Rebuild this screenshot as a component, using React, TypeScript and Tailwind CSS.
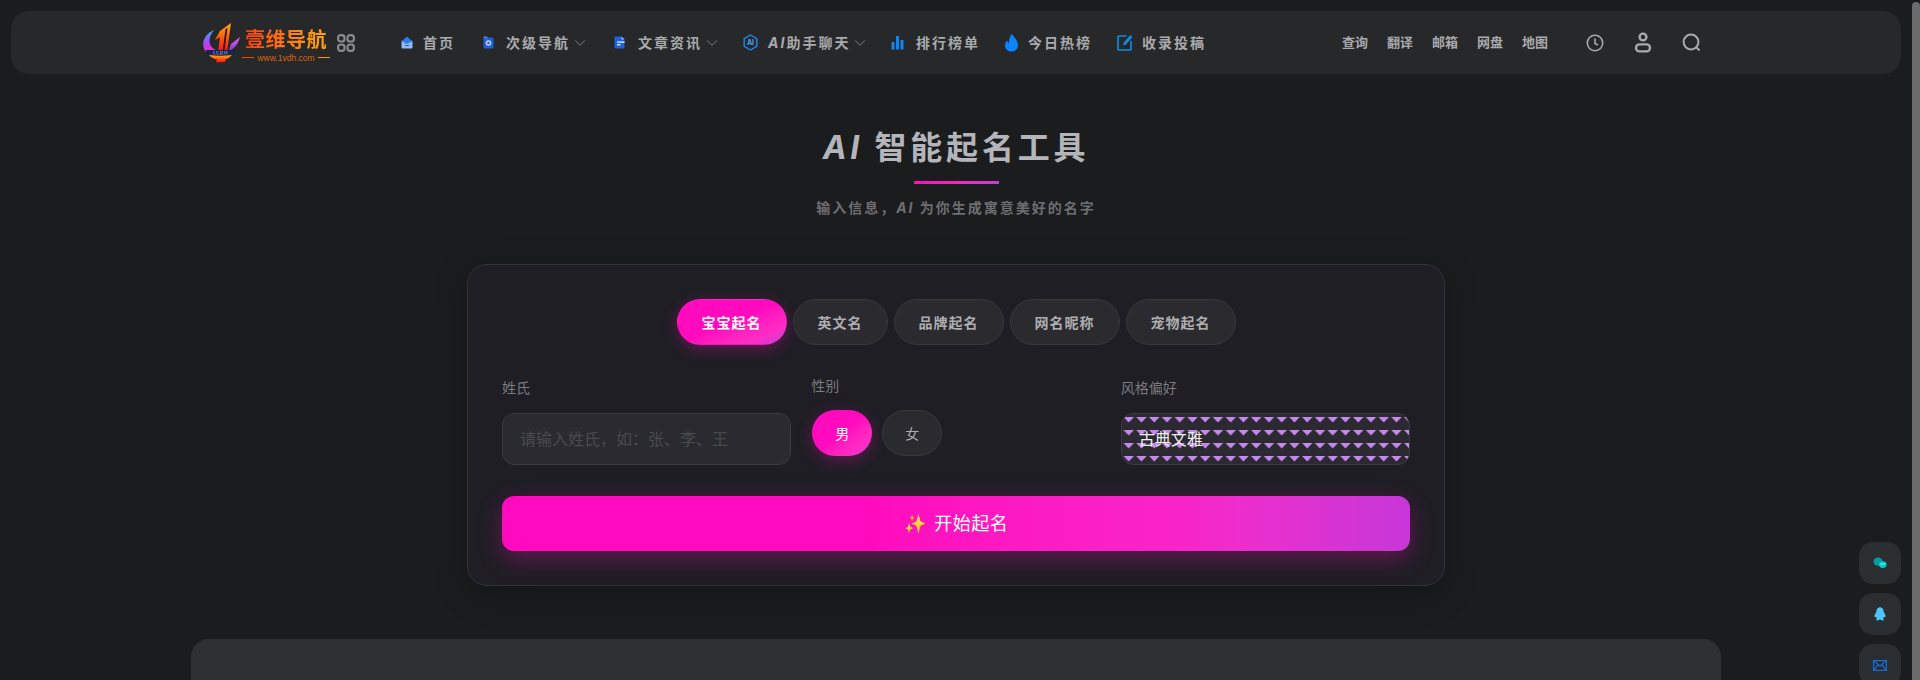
import React from "react";
import { ChevronDown } from "lucide-react";

const sans = "font-['Inter','Noto_Sans_CJK_SC',sans-serif]";

const HomeIcon = () => (
    <svg width="12" height="13" viewBox="0 0 12 13">
        <path d="M6 0.5 L11.5 5.5 H0.5 Z" fill="#2f7be8" />
        <rect x="0.5" y="5" width="11" height="7.5" rx="1" fill="#8dbcf5" />
        <path d="M0.5 5 L6 8 L11.5 5 V4.6 H0.5 Z" fill="#2f7be8" />
        <rect x="4" y="9" width="4" height="1" fill="#2f5fa8" />
    </svg>
);

const CameraIcon = () => (
    <svg width="11" height="13" viewBox="0 0 11 13">
        <rect x="0.5" y="1.5" width="10" height="11" rx="1.5" fill="#1f5fdc" />
        <rect x="0.5" y="0.5" width="4" height="2" rx="0.5" fill="#3f86ee" />
        <circle cx="5.5" cy="7" r="2.8" fill="#bcd8fb" />
        <circle cx="5.5" cy="7" r="1.3" fill="#1f5fdc" />
    </svg>
);

const DocIcon = () => (
    <svg width="11" height="13" viewBox="0 0 11 13">
        <path d="M1.5 0.5 H7.5 L10.5 3.5 V11 a1.5 1.5 0 0 1 -1.5 1.5 H2 a1.5 1.5 0 0 1 -1.5 -1.5 V2 a1.5 1.5 0 0 1 1 -1.5 Z" fill="#1f62e0" />
        <path d="M7.5 0.5 L10.5 3.5 H7.5 Z" fill="#8dbcf5" />
        <rect x="3" y="5.4" width="7.5" height="1.5" fill="#cfe2fb" />
        <rect x="3" y="8" width="3.5" height="1.4" fill="#cfe2fb" />
    </svg>
);

const AiIcon = () => (
    <svg width="15" height="17" viewBox="0 0 15 17">
        <path d="M7.5 1 L13.8 4.7 V12.3 L7.5 16 L1.2 12.3 V4.7 Z" fill="none" stroke="#1e88f0" strokeWidth="1.4" />
        <text x="7.5" y="11.2" textAnchor="middle" fontSize="7" fontWeight="700" fill="#4aa3f5" fontFamily="Inter">AI</text>
    </svg>
);

const BarsIcon = () => (
    <svg width="13" height="15" viewBox="0 0 13 15">
        <rect x="0.5" y="7" width="3" height="7.5" fill="#0f86f0" />
        <rect x="5" y="1" width="3" height="13.5" fill="#0f86f0" />
        <rect x="9.5" y="5" width="3" height="9.5" fill="#0f86f0" />
    </svg>
);

const FireIcon = () => (
    <svg width="15" height="19" viewBox="0 0 15 19">
        <path d="M8 0.5 C8.8 3.5 13.8 6.5 14 12 C14.2 16 11 18.6 7.4 18.6 C3.6 18.6 0.8 16 1 12.2 C1.1 10 2.2 8.3 3.2 7.2 C3.5 8.6 4 9.6 5 10 C4.8 6.5 6 3 8 0.5 Z" fill="#0a84ff" />
    </svg>
);

const EditIcon = () => (
    <svg width="16" height="17" viewBox="0 0 16 17">
        <path d="M9.5 2 H2 a1 1 0 0 0 -1 1 V15 a1 1 0 0 0 1 1 H13 a1 1 0 0 0 1 -1 V7" fill="none" stroke="#0f8ae6" strokeWidth="1.7" />
        <path d="M6 11.5 L6.8 8.5 L13.3 1 L15.5 3 L9 10.4 Z" fill="#0f8ae6" />
    </svg>
);

const GridIcon = () => (
    <svg width="18" height="18" viewBox="0 0 18 18" fill="none" stroke="#8b8c8e" strokeWidth="2.1">
        <rect x="1.1" y="1.1" width="6.4" height="6.4" rx="2.6" />
        <rect x="10.5" y="1.1" width="6.4" height="6.4" rx="2.6" />
        <rect x="1.1" y="10.5" width="6.4" height="6.4" rx="2.6" />
        <rect x="10.5" y="10.5" width="6.4" height="6.4" rx="2.6" />
    </svg>
);

const Logo = () => (
    <svg width="40" height="40" viewBox="0 0 40 40">
        <defs>
            <linearGradient id="wing" x1="0.3" y1="0" x2="0.6" y2="1">
                <stop offset="0" stopColor="#3aa8f0" />
                <stop offset="0.45" stopColor="#b040f0" />
                <stop offset="1" stopColor="#ff2fb0" />
            </linearGradient>
            <linearGradient id="one" x1="0" y1="0" x2="0" y2="1">
                <stop offset="0" stopColor="#ffb010" />
                <stop offset="0.6" stopColor="#ff4a10" />
                <stop offset="1" stopColor="#f01020" />
            </linearGradient>
            <linearGradient id="wingRight" x1="0" y1="0" x2="0" y2="1">
                <stop offset="0" stopColor="#e060e0" />
                <stop offset="1" stopColor="#8040e0" />
            </linearGradient>
        </defs>
        <path d="M13 7 C3 11 -1 22 5 29 C10 33 26 33 30 29 C22 30 13 28 10 23 C7 18 9 12 13 7 Z" fill="url(#wing)" />
        <path d="M39 14 C37 21 34 25 28 28 L30 21 Z" fill="url(#wingRight)" />
        <path d="M19 8 L30 0 L26 29 L17 29 L19 14 L14 17 Z" fill="url(#one)" />
        <path d="M24.5 6 L26.5 5 L23.5 27 L21.8 27 Z" fill="#3a1010" />
        <rect x="5" y="27" width="29" height="4.5" fill="#1c2348" />
        <text x="19.5" y="30.8" textAnchor="middle" fontSize="4.6" fontWeight="700" fill="#4f9cf0" fontFamily="Liberation Serif" letterSpacing="0.7">1VDH</text>
        <path d="M8 32 C14 33 24 33 31 32 C28 35 26 36 25 36 L24 39 L15 39.5 L16 36.5 C13 36 10 34.5 8 32 Z" fill="url(#one)" />
    </svg>
);

const navItems = [
    { icon: <HomeIcon />, label: <>首页</>, key: "home", width: "w-[82px]", iconBox: "w-[22px]", arrow: false },
    { icon: <CameraIcon />, label: <>次级导航</>, key: "sub", width: "w-[131px]", iconBox: "w-[23px]", arrow: true },
    { icon: <DocIcon />, label: <>文章资讯</>, key: "news", width: "w-[129px]", iconBox: "w-[24px]", arrow: true },
    { icon: <AiIcon />, label: <><i>AI</i>助手聊天</>, key: "ai", width: "w-[148px]", iconBox: "w-[25px]", arrow: true },
    { icon: <BarsIcon />, label: <>排行榜单</>, key: "rank", width: "w-[113px]", iconBox: "w-[25px]", arrow: false },
    { icon: <FireIcon />, label: <>今日热榜</>, key: "hot", width: "w-[113px]", iconBox: "w-[24px]", arrow: false },
    { icon: <EditIcon />, label: <>收录投稿</>, key: "submit", width: "w-[100px]", iconBox: "w-[25px]", arrow: false },
];

const quickLinks = ["查询", "翻译", "邮箱", "网盘", "地图"];
const tabs = ["宝宝起名", "英文名", "品牌起名", "网名昵称", "宠物起名"];

const Header = () => (
    <header className="h-[63px] bg-[#27282a] rounded-[18px] flex items-center pl-[190px]">
        <Logo />
        <div className="ml-[3px] mt-[6px] w-[84px] flex flex-col items-center">
            <span className="text-[20px] leading-[22px] font-bold tracking-[0.5px] whitespace-nowrap bg-gradient-to-r from-[#ff3a10] to-[#ffa50a] bg-clip-text text-transparent">壹维导航</span>
            <div className="flex items-center gap-[3px] mt-[2px]">
                <span className="w-[12px] h-px bg-[#e8480f]" />
                <span className="text-[8.5px] leading-[10px] text-[#d8660f] font-['Liberation_Sans',sans-serif]">www.1vdh.com</span>
                <span className="w-[12px] h-px bg-[#e8a00f]" />
            </div>
        </div>
        <div className="ml-[9px]">
            <GridIcon />
        </div>
        <nav className="ml-[46px] flex items-center">
            {navItems.map((item) => (
                <div key={item.key} className={`${item.width} flex items-center`}>
                    <span className={`${item.iconBox} flex items-center`}>{item.icon}</span>
                    <span className="text-[14px] font-bold tracking-[2px] text-[#a9aaad] whitespace-nowrap">{item.label}</span>
                    {item.arrow && <ChevronDown size={18} strokeWidth={1.3} className="ml-[1px] text-[#808184]" />}
                </div>
            ))}
        </nav>
        <div className="ml-[125px] flex items-center gap-[19px]">
            {quickLinks.map((link) => (
                <span key={link} className="text-[13px] font-bold text-[#a9aaad] whitespace-nowrap">{link}</span>
            ))}
        </div>
        <div className="ml-[38px] flex items-center gap-[30px] text-[#a9aaad]">
            <svg width="18" height="18" viewBox="0 0 18 18" fill="none" stroke="currentColor" strokeWidth="1.6">
                <circle cx="9" cy="9" r="7.7" />
                <path d="M9 4.5 V9.4 L12 11" />
            </svg>
            <svg width="18" height="21" viewBox="0 0 18 21" fill="none" stroke="currentColor" strokeWidth="2.4">
                <circle cx="9" cy="5" r="3.4" />
                <rect x="2" y="12.4" width="14" height="7" rx="3.5" />
            </svg>
            <svg width="19" height="19" viewBox="0 0 19 19" fill="none" stroke="currentColor" strokeWidth="2">
                <circle cx="9" cy="9" r="7.4" />
                <path d="M14 14 L17.5 17.5" />
            </svg>
        </div>
    </header>
);

const TrianglePattern = () => (
    <svg className="absolute inset-0 w-full h-full" aria-hidden="true">
        <defs>
            <pattern id="tri" x="1.5" y="3" width="12.75" height="13" patternUnits="userSpaceOnUse">
                <path d="M0 0 H10.5 L5.25 5.6 Z" fill="#c788ee" />
            </pattern>
        </defs>
        <rect width="100%" height="100%" fill="url(#tri)" />
    </svg>
);

const SideButton = ({ children }: { children: React.ReactNode }) => (
    <div className="w-[42px] h-[42px] rounded-[14px] bg-[#2b2e30] flex items-center justify-center">{children}</div>
);

const App = () => {
    return (
        <div className={`${sans} relative h-[680px] overflow-hidden bg-[#1b1c1e] flex`}>
            <div className="flex-1 min-w-0">
                <div className="pt-[11px] pl-[11px] pr-[11px]">
                    <Header />
                </div>

                <div className="mt-[52px] flex flex-col items-center">
                    <h1 className="text-[32px] leading-[44px] font-bold tracking-[3.8px] text-[#b4b5ba]"><i>AI</i> 智能起名工具</h1>
                    <div className="mt-[11px] w-[85px] h-[3px] bg-gradient-to-r from-[#ff0abe] via-[#ff20c0] to-[#c837d8]" />
                    <p className="mt-[14px] text-[14px] leading-[20px] font-bold tracking-[2px] text-[#6d6e72]">输入信息，<i>AI</i> 为你生成寓意美好的名字</p>
                </div>

                <section className="mx-auto mt-[46px] w-[978px] h-[322px] rounded-[20px] bg-[#1e1e24] border border-[#323238] shadow-[0_8px_32px_rgba(0,0,0,0.25)] px-[34px] pt-[34px]">
                    <div className="flex justify-center gap-[6px]">
                        {tabs.map((tab, i) => (
                            <button
                                key={tab}
                                className={
                                    i === 0
                                        ? "h-[46px] px-[24px] rounded-full border border-transparent text-[14px] font-bold tracking-[1px] text-white bg-gradient-to-br from-[#ff0abe] from-50% via-[#ff2cc4] via-80% to-[#c837d8] shadow-[0_4px_15px_rgba(255,10,190,0.3)]"
                                        : "h-[46px] px-[24px] rounded-full border border-[#38383d] text-[14px] font-bold tracking-[1px] text-[#aeaeb0] bg-[#2a2a2f]"
                                }
                            >
                                {tab}
                            </button>
                        ))}
                    </div>

                    <div className="mt-[23px] grid grid-cols-3 gap-x-5 items-start">
                        <div className="pt-[10px]">
                            <label className="block text-[14px] leading-[20px] text-[#7b7b80]">姓氏</label>
                            <div className="mt-[15px] h-[52px] rounded-[12px] bg-[#2a2a30] border border-[#3a3a40] px-[17px] flex items-center text-[16px] text-[#4a4a4f]">
                                请输入姓氏，如：张、李、王
                            </div>
                        </div>
                        <div className="pt-[8px]">
                            <label className="block text-[14px] leading-[20px] text-[#7b7b80]">性别</label>
                            <div className="mt-[14px] ml-px flex gap-[10px]">
                                <button className="w-[60px] h-[46px] rounded-full text-[14px] text-white bg-gradient-to-br from-[#ff0abe] from-50% via-[#ff2cc4] via-80% to-[#c837d8] shadow-[0_4px_15px_rgba(255,10,190,0.3)]">男</button>
                                <button className="w-[60px] h-[46px] rounded-full text-[14px] text-[#aeaeb0] bg-[#2a2a2f] border border-[#38383d]">女</button>
                            </div>
                        </div>
                        <div className="pt-[10px]">
                            <label className="block text-[14px] leading-[20px] text-[#7b7b80]">风格偏好</label>
                            <div className="relative mt-[15px] h-[52px] rounded-[12px] overflow-hidden bg-[#2a2a30] border border-[#3a3a40] px-[17px] flex items-center text-[16px] text-[#eeeeee]">
                                <TrianglePattern />
                                <span className="relative">古典文雅</span>
                            </div>
                        </div>
                    </div>

                    <button className="mt-[31px] w-full h-[55px] rounded-[12px] flex items-center justify-center gap-[8px] text-[18px] font-normal tracking-[0.5px] text-white bg-gradient-to-r from-[#ff0abe] from-40% via-[#f925c8] via-75% to-[#c837d8] shadow-[0_8px_25px_rgba(255,10,190,0.3)]">
                        <span>✨</span>
                        <span>开始起名</span>
                    </button>
                </section>

                <div className="mx-auto mt-[53px] w-[1530px] h-[200px] rounded-t-[18px] bg-[#2f3032]" />
            </div>

            <div className="w-[8px] shrink-0 pt-[2px]">
                <div className="h-full rounded-t-full bg-[#6c6c6c]" />
            </div>

            <div className="absolute left-[1859px] top-[542px] flex flex-col gap-[9px]">
                <SideButton>
                    <svg width="14" height="12" viewBox="0 0 14 12">
                        <ellipse cx="5" cy="4.6" rx="4.6" ry="4.2" fill="#0b9a9c" />
                        <ellipse cx="9.8" cy="7.6" rx="3.8" ry="3.4" fill="#06c8cc" />
                        <circle cx="8.4" cy="7" r="0.7" fill="#d8ffff" />
                        <circle cx="11" cy="7" r="0.7" fill="#d8ffff" />
                    </svg>
                </SideButton>
                <SideButton>
                    <svg width="12" height="14" viewBox="0 0 12 14">
                        <path d="M6 0.3 C8.6 0.3 9.6 2.5 9.7 5 C10.8 6.6 11.9 8.4 11.6 9.9 C11.2 10.5 10.6 10.1 10.1 9.5 C9.9 10.6 9.4 11.2 9 11.7 C9.8 12.1 10 12.9 9.4 13.2 C8.4 13.6 7 13.3 6.2 12.6 H5.8 C5 13.3 3.6 13.6 2.6 13.2 C2 12.9 2.2 12.1 3 11.7 C2.6 11.2 2.1 10.6 1.9 9.5 C1.4 10.1 0.8 10.5 0.4 9.9 C0.1 8.4 1.2 6.6 2.3 5 C2.4 2.5 3.4 0.3 6 0.3 Z" fill="#4dc4ff" />
                    </svg>
                </SideButton>
                <SideButton>
                    <svg width="14" height="11" viewBox="0 0 14 11" fill="none" stroke="#1272e6" strokeWidth="1.1">
                        <rect x="0.6" y="0.6" width="12.8" height="9.8" />
                        <path d="M0.6 0.6 L7 6 L13.4 0.6 M0.6 10.4 L5.2 4.6 M13.4 10.4 L8.8 4.6" />
                    </svg>
                </SideButton>
            </div>
        </div>
    );
};

export default App;
